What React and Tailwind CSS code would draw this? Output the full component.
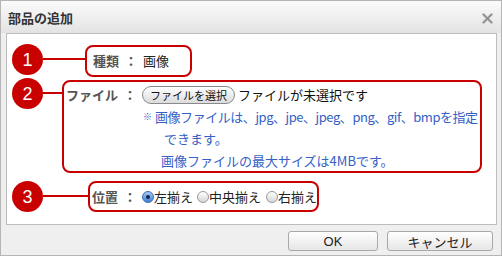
import React from 'react';

const Num = ({n}) => (
    <div className="w-[31px] h-[31px] shrink-0 rounded-full bg-[#c80000] text-white flex items-center justify-center text-[18px] leading-none font-['Liberation_Sans',sans-serif]">
        {n}
    </div>
);

const Line = ({w}) => (
    <div className="h-[2px] mt-[14px] shrink-0 bg-[#c80000]" style={{width: w}}/>
);

const Colon = () => (
    <span className="w-[24px] shrink-0 text-center font-bold text-[#555]">：</span>
);

const Radio = ({checked}) => (
    checked ? (
        <span className="w-[12px] h-[12px] shrink-0 rounded-full border border-[#3d6bb3] bg-gradient-to-b from-[#a9c8f0] to-[#3f7fd6] flex items-center justify-center">
            <span className="w-[4px] h-[4px] rounded-full bg-[#10254a]"/>
        </span>
    ) : (
        <span className="w-[12px] h-[12px] shrink-0 rounded-full border border-[#9a9a9a] bg-gradient-to-b from-[#ffffff] to-[#d6d6d6]"/>
    )
);

export default function App() {
    return (
        <div className="w-[502px] h-[256px] border border-[#b5b5b5] bg-[#efefef] flex flex-col font-['Noto_Sans_CJK_JP',sans-serif] text-[13px]">
            {/* title bar */}
            <div className="h-[32px] shrink-0 bg-gradient-to-b from-[#fbfbfb] to-[#e3e3e3] flex items-center justify-between pl-[7px] pr-[8px]">
                <span className="font-bold text-[#333] text-[13px] leading-none">部品の追加</span>
                <svg width="11" height="11" viewBox="0 0 11 11" className="mt-[2px]">
                    <path d="M1.5 1.5 L9.5 9.5 M9.5 1.5 L1.5 9.5" stroke="#c8c8c8" strokeWidth="3" strokeLinecap="round"/>
                    <path d="M1.5 1.5 L9.5 9.5 M9.5 1.5 L1.5 9.5" stroke="#8c8c8c" strokeWidth="1.6" strokeLinecap="round"/>
                </svg>
            </div>

            {/* content panel */}
            <div className="ml-[5px] w-[491px] h-[192px] shrink-0 bg-white border border-[#bdbdbd] flex flex-col">
                {/* 1 */}
                <div className="flex items-start mt-[10px] ml-[5px]">
                    <Num n="1"/>
                    <Line w={42}/>
                    <div className="w-[107px] h-[32px] mt-[1px] border-2 border-[#c80000] rounded-[8px] flex items-center">
                        <span className="w-[32px] shrink-0 text-right font-bold text-[#555]">種類</span>
                        <Colon/>
                        <span className="text-[#222]">画像</span>
                    </div>
                </div>

                {/* 2 */}
                <div className="flex items-start mt-[1px] ml-[5px]">
                    <Num n="2"/>
                    <Line w={19}/>
                    <div className="w-[420px] h-[93px] mt-[2px] border-2 border-[#c80000] rounded-[8px] pt-[2px]">
                        <div className="flex items-center h-[22px] whitespace-nowrap">
                            <span className="w-[54px] shrink-0 text-right font-bold text-[#555]">ファイル</span>
                            <Colon/>
                            <span className="w-[93px] h-[18px] shrink-0 rounded-full border border-[#8a8a8a] bg-gradient-to-b from-[#ffffff] to-[#dcdcdc] flex items-center justify-center text-[11px] text-[#111] leading-none">ファイルを選択</span>
                            <span className="ml-[3px] text-[#111]">ファイルが未選択です</span>
                        </div>
                        <div className="ml-[78px] text-[#3560c4] whitespace-nowrap">
                            <div className="h-[22px] flex items-center tracking-[-0.45px]">
                                <span className="text-[9px] w-[13px] shrink-0 pl-[1px]">※</span>
                                <span>画像ファイルは、jpg、jpe、jpeg、png、gif、bmpを指定</span>
                            </div>
                            <div className="h-[21px] flex items-center pl-[22px]">できます。</div>
                            <div className="h-[22px] mt-[1px] flex items-center pl-[19px]">画像ファイルの最大サイズは4MBです。</div>
                        </div>
                    </div>
                </div>

                {/* 3 */}
                <div className="flex items-start mt-[8px] ml-[5px]">
                    <Num n="3"/>
                    <Line w={45}/>
                    <div className="w-[231px] h-[31px] border-2 border-[#c80000] rounded-[8px] flex items-center whitespace-nowrap">
                        <span className="w-[28px] shrink-0 text-right font-bold text-[#555]">位置</span>
                        <Colon/>
                        <Radio checked/>
                        <span className="text-[#222] mr-[4px]">左揃え</span>
                        <Radio/>
                        <span className="text-[#222] mr-[5px]">中央揃え</span>
                        <Radio/>
                        <span className="text-[#222]">右揃え</span>
                    </div>
                </div>
            </div>

            {/* footer */}
            <div className="flex justify-end gap-[9px] pt-[6px] pr-[8px]">
                <button className="w-[90px] h-[20px] rounded-[3px] border border-[#a8a8a8] bg-gradient-to-b from-[#ffffff] to-[#e6e6e6] text-[13px] text-[#222] leading-none font-['Liberation_Sans','Noto_Sans_CJK_JP',sans-serif]">OK</button>
                <button className="w-[106px] h-[20px] rounded-[3px] border border-[#a8a8a8] bg-gradient-to-b from-[#ffffff] to-[#e6e6e6] text-[13px] text-[#222] leading-none">キャンセル</button>
            </div>
        </div>
    );
}
